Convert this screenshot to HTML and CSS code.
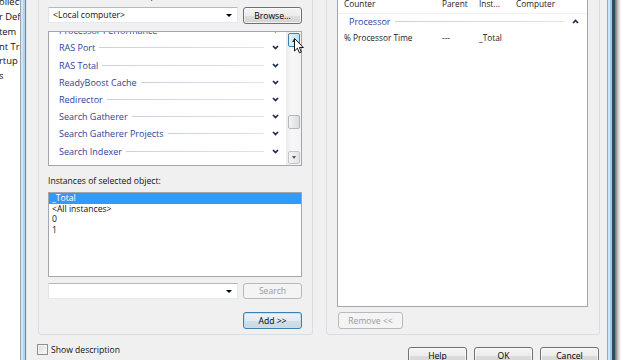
FILE: index.html
```html
<!DOCTYPE html>
<html lang="en">

<head>
    <meta charset="UTF-8">
    <meta name="viewport" content="width=device-width, initial-scale=1.0">
    <title>Add Counters</title>
    <link rel="stylesheet" href="styles.css">
</head>

<body>
    <div class="screen">
        <div class="tree">
            <div>ollect</div>
            <div>r Defi</div>
            <div>tem</div>
            <div>nt Tra</div>
            <div>rtup E</div>
            <div>s</div>
        </div>

        <div class="dialog">
            <div class="frame-left"></div>
            <div class="dialog-body">
                <div class="groups">
                    <div class="group available">
                        <div class="caption">Select counters from computer:</div>
                        <div class="row">
                            <div class="combo"><span>&lt;Local computer&gt;</span><i class="drop"></i></div>
                            <button class="btn browse">Browse...</button>
                        </div>

                        <div class="objects">
                            <div class="object-view">
                                <div class="object-list">
                                    <div class="object"><span>Processor Performance</span><b></b><svg width="7" height="5" viewBox="0 0 7 5"><path d="M1 1 L3.5 3.6 L6 1" /></svg></div>
                                    <div class="object"><span>RAS Port</span><b></b><svg width="7" height="5" viewBox="0 0 7 5"><path d="M1 1 L3.5 3.6 L6 1" /></svg></div>
                                    <div class="object"><span>RAS Total</span><b></b><svg width="7" height="5" viewBox="0 0 7 5"><path d="M1 1 L3.5 3.6 L6 1" /></svg></div>
                                    <div class="object"><span>ReadyBoost Cache</span><b></b><svg width="7" height="5" viewBox="0 0 7 5"><path d="M1 1 L3.5 3.6 L6 1" /></svg></div>
                                    <div class="object"><span>Redirector</span><b></b><svg width="7" height="5" viewBox="0 0 7 5"><path d="M1 1 L3.5 3.6 L6 1" /></svg></div>
                                    <div class="object"><span>Search Gatherer</span><b></b><svg width="7" height="5" viewBox="0 0 7 5"><path d="M1 1 L3.5 3.6 L6 1" /></svg></div>
                                    <div class="object"><span>Search Gatherer Projects</span><b></b><svg width="7" height="5" viewBox="0 0 7 5"><path d="M1 1 L3.5 3.6 L6 1" /></svg></div>
                                    <div class="object"><span>Search Indexer</span><b></b><svg width="7" height="5" viewBox="0 0 7 5"><path d="M1 1 L3.5 3.6 L6 1" /></svg></div>
                                    <div class="object"><span>Security Per-Process Statistics</span><b></b><svg width="7" height="5" viewBox="0 0 7 5"><path d="M1 1 L3.5 3.6 L6 1" /></svg></div>
                                </div>
                            </div>
                            <div class="vscroll">
                                <div class="sb-btn sb-up"><i></i></div>
                                <div class="sb-track"><div class="sb-thumb"></div></div>
                                <div class="sb-btn sb-down"><i></i></div>
                            </div>
                        </div>

                        <div class="label">Instances of selected object:</div>
                        <div class="instances">
                            <div class="inst selected">_Total</div>
                            <div class="inst">&lt;All instances&gt;</div>
                            <div class="inst">0</div>
                            <div class="inst">1</div>
                        </div>

                        <div class="row search-row">
                            <div class="combo"><span></span><i class="drop"></i></div>
                            <button class="btn" disabled>Search</button>
                        </div>
                        <div class="row add-row">
                            <button class="btn default">Add &gt;&gt;</button>
                        </div>
                    </div>

                    <div class="group added">
                        <div class="listview">
                            <div class="lv-header">
                                <div class="col c-counter">Counter</div>
                                <div class="col c-parent">Parent</div>
                                <div class="col c-inst">Inst...</div>
                                <div class="col c-computer">Computer</div>
                            </div>
                            <div class="lv-group"><span>Processor</span><b></b><svg width="7" height="5" viewBox="0 0 7 5"><path d="M1 4 L3.5 1.4 L6 4" /></svg></div>
                            <div class="lv-row">
                                <div class="col c-counter">% Processor Time</div>
                                <div class="col c-parent">---</div>
                                <div class="col c-inst">_Total</div>
                                <div class="col c-computer"></div>
                            </div>
                        </div>
                        <div class="row">
                            <button class="btn remove" disabled>Remove &lt;&lt;</button>
                        </div>
                    </div>
                </div>

                <div class="footer">
                    <label class="check"><span class="box"></span>Show description</label>
                    <div class="buttons">
                        <button class="btn">Help</button>
                        <button class="btn">OK</button>
                        <button class="btn">Cancel</button>
                    </div>
                </div>
            </div>
            <div class="frame-right"></div>
        </div>
    </div>

    <svg class="cursor" width="11" height="16" viewBox="0 0 11 16">
        <path d="M0.5 0.5 V13 L3.4 10.2 L5.4 14.8 L7.3 14 L5.4 9.5 H9.4 Z" fill="#fff" stroke="#000" stroke-width="0.9" stroke-linejoin="round" />
    </svg>
</body>

</html>
```

FILE: styles.css
```css
html,
body {
    margin: 0;
    height: 360px;
    overflow: hidden;
    background: #fff;
}

body {
    position: relative;
    font-family: "Open Sans", "Noto Sans", sans-serif;
    font-size: 8.6px;
    color: #111;
}

.screen {
    display: flex;
    height: 360px;
}

/* console tree behind the dialog */
.tree {
    width: 20px;
    flex-shrink: 0;
    overflow: hidden;
    white-space: nowrap;
    font-size: 9.4px;
    line-height: 14.7px;
    margin-top: -4.6px;
    color: #111;
}

.tree div {
    margin-left: -1px;
}

/* dialog window */
.dialog {
    display: flex;
    width: 601px;
    flex-shrink: 0;
}

.frame-left {
    width: 7px;
    background: linear-gradient(to right, #9aa5ae 0 1px, #d3e5f3 1px 3px, #b4d2ea 3px 5px, #6f8aa0 5px 6px, #e2e6ea 6px);
}

.frame-right {
    width: 14px;
    background: linear-gradient(to right, #a4a8ac 0 1px, #c9e5f6 1px 3px, #9ccbeb 3px 5px, #2d4d5e 5px 8px, #6d6d6d 8px, #c8c8c8 11px, #fff 14px);
}

.dialog-body {
    width: 580px;
    background: #f0f0f0;
    margin-top: -26px;
}

.groups {
    display: grid;
    grid-template-columns: 275px 274px;
    column-gap: 13px;
    padding-left: 11px;
}

.group {
    border: 1px solid #d5dfe5;
    border-radius: 3px;
}

.available {
    padding: 15px 10px 5px 9px;
}

.added {
    padding: 18px 11px 5px 10px;
}

.caption {
    height: 12px;
    line-height: 12px;
    white-space: nowrap;
}

.row {
    display: flex;
    justify-content: space-between;
    align-items: flex-start;
    margin-top: 5px;
}

/* buttons */
.btn {
    height: 17px;
    padding: 0;
    font: inherit;
    color: #000;
    border: 1px solid #707070;
    border-radius: 3px;
    background: linear-gradient(#f4f4f4 0%, #ececec 50%, #dedede 51%, #d3d3d3 100%);
    box-shadow: inset 0 0 0 1px rgba(255, 255, 255, 0.7);
}

.browse {
    width: 59px;
}

.btn:disabled {
    color: #9b9b9b;
    border-color: #b6babc;
    background: #f4f4f4;
    box-shadow: none;
}

.btn.default {
    width: 59px;
    border-color: #3c7fb1;
    background: linear-gradient(#edf3f8 0%, #e2eaf1 50%, #d4dfe8 51%, #cbd7e2 100%);
    box-shadow: inset 0 0 0 1px #bfe2f7;
}

/* combo boxes */
.combo {
    width: 190px;
    height: 16px;
    box-sizing: border-box;
    display: flex;
    align-items: center;
    justify-content: space-between;
    padding: 0 5px 0 4px;
    background: #fff;
    border: 1px solid;
    border-color: #b5b8bf #e3e9ef #e3e9ef #e2e3ea;
    white-space: nowrap;
}

.drop {
    width: 0;
    height: 0;
    border-left: 3px solid transparent;
    border-right: 3px solid transparent;
    border-top: 3px solid #000;
}

/* performance objects list */
.objects {
    display: flex;
    height: 135px;
    margin-top: 7px;
    box-sizing: border-box;
    border: 1px solid #a3a7ad;
    background: #fff;
}

.object-view {
    flex: 1;
    overflow: hidden;
}

.object-list {
    margin-top: -9.8px;
}

.object {
    display: flex;
    align-items: center;
    height: 17.2px;
    padding: 0 7px 0 10px;
    font-size: 9px;
    color: #2c4398;
    white-space: nowrap;
}

.object b,
.lv-group b {
    flex: 1;
    height: 1px;
    margin: 0 8px 0 4px;
    background: linear-gradient(to right, #c9d2e3, #dde3ee);
}

.object svg path,
.lv-group svg path {
    fill: none;
    stroke: #1d2a55;
    stroke-width: 1.7;
}

.vscroll {
    width: 15px;
    display: flex;
    flex-direction: column;
    background: linear-gradient(to right, #ececec, #f7f7f7 40%, #f3f3f3);
}

.sb-btn {
    height: 13px;
    margin: 1px 1px 1px 2px;
    display: flex;
    justify-content: center;
    align-items: center;
    border: 1px solid #c2c5c9;
    border-radius: 2px;
    box-sizing: border-box;
    background: linear-gradient(to right, #f3f3f3, #e4e4e4);
}

.sb-up {
    height: 14px;
    border-color: #3c7fb1;
    background: linear-gradient(to right, #e3f4fc, #b9e1f7);
}

.sb-up i {
    border-left: 2.5px solid transparent;
    border-right: 2.5px solid transparent;
    border-bottom: 3px solid #243b4c;
}

.sb-down i {
    border-left: 2.5px solid transparent;
    border-right: 2.5px solid transparent;
    border-top: 3px solid #555;
}

.sb-track {
    flex: 1;
}

.sb-thumb {
    height: 12px;
    margin: 67px 1px 0 2px;
    border: 1px solid #b4b7bb;
    border-radius: 2px;
    background: linear-gradient(to right, #f5f5f5, #dcdcdc);
}

/* instances */
.label {
    margin-top: 8px;
    height: 14px;
    line-height: 14px;
    white-space: nowrap;
}

.instances {
    margin-top: 4px;
    height: 85px;
    box-sizing: border-box;
    border: 1px solid #a3a7ad;
    background: #fff;
}

.inst {
    height: 10.5px;
    line-height: 10.5px;
    padding-left: 3px;
    white-space: nowrap;
}

.inst.selected {
    background: #3399ff;
    color: #fff;
}

.search-row {
    margin-top: 6px;
}

.search-row .btn {
    width: 59px;
    height: 16px;
}

.add-row {
    justify-content: flex-end;
    margin-top: 13px;
}

/* added counters list */
.listview {
    height: 314px;
    box-sizing: border-box;
    border: 1px solid #a3a7ad;
    background: #fff;
    font-size: 8.3px;
}

.lv-header,
.lv-row {
    display: flex;
    white-space: nowrap;
}

.lv-header {
    height: 19px;
    line-height: 19px;
    color: #222;
    border-bottom: 1px solid #f2f2f2;
}

.lv-row {
    margin-top: 1px;
    height: 14px;
    line-height: 14px;
    color: #222;
}

.col {
    padding-left: 6px;
    box-sizing: border-box;
}

.c-counter {
    width: 98px;
}

.c-parent {
    width: 37px;
}

.c-inst {
    width: 37px;
}

.c-computer {
    flex: 1;
}

.lv-group {
    display: flex;
    align-items: center;
    height: 17px;
    margin-top: -1px;
    padding: 0 8px 0 11px;
    font-size: 9px;
    color: #2c4398;
}

.remove {
    width: 65px;
    margin-left: 1px;
}

.added .row {
    justify-content: flex-start;
}

/* footer */
.footer {
    display: flex;
    justify-content: space-between;
    align-items: flex-start;
    padding: 0 8px 0 10px;
}

.check {
    display: flex;
    align-items: center;
    margin-top: 9px;
    height: 11px;
    white-space: nowrap;
}

.box {
    width: 11px;
    height: 11px;
    box-sizing: border-box;
    margin-right: 3px;
    border: 1px solid #8e8f8f;
    background: linear-gradient(135deg, #dcdcdc, #fbfbfb);
    box-shadow: inset 0 0 0 1px #f4f4f4;
}

.buttons {
    display: flex;
    gap: 7px;
    margin-top: 12px;
}

.buttons .btn {
    width: 59px;
}

.cursor {
    position: absolute;
    left: 294px;
    top: 38px;
}
```
